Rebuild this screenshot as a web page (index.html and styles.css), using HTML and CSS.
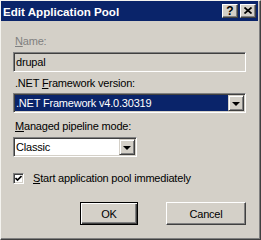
FILE: index.html
```html
<!DOCTYPE html>
<html lang="en">

<head>
    <meta charset="UTF-8">
    <title>Edit Application Pool</title>
    <link rel="stylesheet" href="styles.css">
</head>

<body>
    <div class="window">
        <div class="titlebar">
            <span class="title">Edit Application Pool</span>
            <div class="caption-buttons">
                <span class="cap-btn help">?</span>
                <span class="cap-btn close">
                    <svg width="8" height="7" viewBox="0 0 8 7">
                        <path d="M0.5 0.5 L7.5 6.5 M7.5 0.5 L0.5 6.5" stroke="#000" stroke-width="1.7" fill="none" />
                    </svg>
                </span>
            </div>
        </div>
        <div class="content">
            <label class="field-label disabled"><u>N</u>ame:</label>
            <div class="textbox disabled">drupal</div>

            <label class="field-label lbl-framework">.NET <u>F</u>ramework version:</label>
            <div class="combo wide">
                <span class="combo-value selected">.NET Framework v4.0.30319</span>
                <span class="drop-btn"><i class="arrow"></i></span>
            </div>

            <label class="field-label lbl-pipeline"><u>M</u>anaged pipeline mode:</label>
            <div class="combo narrow">
                <span class="combo-value">Classic</span>
                <span class="drop-btn"><i class="arrow"></i></span>
            </div>

            <div class="check-row">
                <span class="checkbox">
                    <svg width="7" height="7" viewBox="0 0 7 7">
                        <path d="M0.5 3 L2.5 5 L6.5 1" stroke="#000" stroke-width="1.7" fill="none" />
                    </svg>
                </span>
                <span class="check-label"><u>S</u>tart application pool immediately</span>
            </div>

            <div class="buttons">
                <button class="btn default">OK</button>
                <button class="btn">Cancel</button>
            </div>
        </div>
    </div>
</body>

</html>
```

FILE: styles.css
```css
* {
    margin: 0;
    padding: 0;
    box-sizing: border-box;
}

body {
    font-family: 'Liberation Sans', Arial, sans-serif;
    font-size: 11px;
    letter-spacing: -0.2px;
    color: #000;
    background: #d4d0c8;
}

u {
    text-decoration: underline;
    text-underline-offset: 1px;
}

.window {
    width: 261px;
    height: 240px;
    background: #d4d0c8;
    border: 1px solid;
    border-color: #f4f3ef #404040 #404040 #f4f3ef;
    box-shadow: inset -1px -1px #808080;
    padding: 0 2px 2px 0;
    display: flex;
    flex-direction: column;
}

/* title bar */
.titlebar {
    height: 20px;
    background: #0a246a;
    display: flex;
    align-items: center;
    justify-content: space-between;
    padding: 0 2px 0 2px;
}

.title {
    color: #fff;
    font-weight: bold;
    font-size: 11.6px;
    letter-spacing: 0;
    line-height: 13px;
}

.caption-buttons {
    display: flex;
    gap: 2px;
}

.cap-btn {
    width: 16px;
    height: 14px;
    background: #d4d0c8;
    border: 1px solid;
    border-color: #fff #404040 #404040 #fff;
    box-shadow: inset -1px -1px #808080;
    display: flex;
    align-items: center;
    justify-content: center;
    font-weight: bold;
    font-size: 12px;
    line-height: 11px;
    letter-spacing: 0;
}

.cap-btn svg {
    display: block;
    margin: 0 1px 1px 0;
}

/* dialog body */
.content {
    flex: 1;
    padding: 14px 12px 0 12px;
}

.field-label {
    display: block;
    line-height: 13px;
    margin-left: 2px;
}

.field-label.disabled {
    color: #808080;
}

.lbl-framework {
    margin-top: 5px;
}

.lbl-pipeline {
    margin-top: 7px;
}

.textbox {
    margin-top: 4px;
    height: 20px;
    border: 1px solid;
    border-color: #808080 #fff #fff #808080;
    box-shadow: inset 1px 1px #404040, inset -1px -1px #d4d0c8;
    padding-left: 2px;
    line-height: 18px;
}

.textbox.disabled {
    background: #d4d0c8;
}

.combo {
    height: 20px;
    background: #fff;
    border: 1px solid;
    border-color: #808080 #fff #fff #808080;
    box-shadow: inset 1px 1px #404040, inset -1px -1px #d4d0c8;
    padding: 1px;
    display: flex;
}

.combo.wide {
    margin-top: 3px;
}

.combo.narrow {
    margin-top: 4px;
    width: 124px;
}

.combo-value {
    flex: 1;
    padding-left: 1px;
    line-height: 16px;
}

.combo-value.selected {
    background: #0a246a;
    color: #fff;
}

.drop-btn {
    width: 16px;
    height: 16px;
    background: #d4d0c8;
    border: 1px solid;
    border-color: #d4d0c8 #404040 #404040 #d4d0c8;
    box-shadow: inset 1px 1px #fff, inset -1px -1px #808080;
    display: flex;
    align-items: center;
    justify-content: center;
}

.arrow {
    width: 0;
    height: 0;
    border-left: 4px solid transparent;
    border-right: 4px solid transparent;
    border-top: 4px solid #000;
    margin-top: 1px;
}

/* checkbox */
.check-row {
    margin-top: 15px;
    height: 13px;
    display: flex;
    align-items: center;
    gap: 9px;
    line-height: 13px;
}

.checkbox {
    width: 11px;
    height: 11px;
    background: #fff;
    border: 1px solid;
    border-color: #808080 #fff #fff #808080;
    box-shadow: inset 1px 1px #404040, inset -1px -1px #d4d0c8;
    padding: 1px;
}

.checkbox svg {
    display: block;
}

/* buttons */
.buttons {
    margin-top: 17px;
    display: flex;
    justify-content: flex-end;
    gap: 28px;
}

.btn {
    height: 23px;
    font-family: inherit;
    font-size: 11px;
    letter-spacing: -0.2px;
    color: #000;
    background: #d4d0c8;
    border: 1px solid;
    border-color: #fff #404040 #404040 #fff;
    box-shadow: inset -1px -1px #808080;
    width: 80px;
}

.btn.default {
    width: 58px;
    border-color: #000;
    box-shadow: inset 1px 1px #fff, inset -1px -1px #404040, inset -2px -2px #808080;
}
```
